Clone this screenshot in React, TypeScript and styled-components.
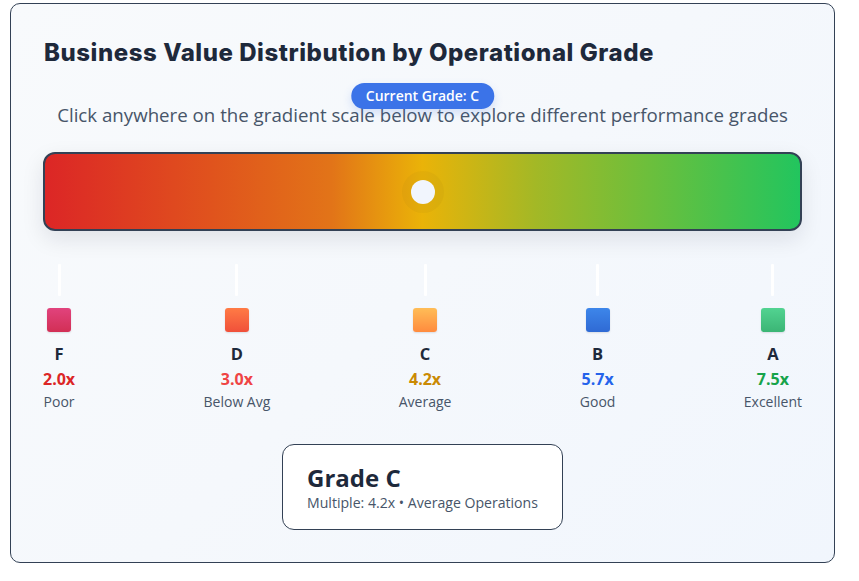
import React from "react";
import styled, { createGlobalStyle } from "styled-components";

const GlobalStyle = createGlobalStyle`
  * { box-sizing: border-box; }
  html, body { margin: 0; padding: 0; background: #ffffff; }
  body { font-family: "Open Sans", "Noto Sans", sans-serif; }
`;

const Page = styled.div`
  padding: 3px 0 0 10px;
`;

const Card = styled.section`
  width: 825px;
  height: 560px;
  border: 1px solid #334155;
  border-radius: 10px;
  background: linear-gradient(135deg, #f8fafc 0%, #f5f8fc 50%, #f1f6fd 100%);
  padding: 32px;
  display: flex;
  flex-direction: column;
`;

const Title = styled.h1`
  margin: 2px 0 0 1px;
  font-family: "Inter", "Noto Sans", sans-serif;
  font-weight: 800;
  font-size: 24px;
  line-height: 29px;
  color: #1e293b;
  letter-spacing: 0.55px;
`;

const Subtitle = styled.p`
  margin: 36px 0 0 0;
  text-align: center;
  font-size: 18.7px;
  font-weight: 500;
  line-height: 24px;
  color: #475569;
`;

const Bar = styled.div`
  position: relative;
  margin-top: 25px;
  height: 79px;
  border: 2px solid #334155;
  border-radius: 12px;
  background: linear-gradient(
    90deg,
    #dc2626 0%,
    #e0531d 22%,
    #e27418 38%,
    #eab308 50%,
    #a3b826 65%,
    #6cbf3c 80%,
    #22c55e 100%
  );
  box-shadow: 0 8px 22px rgba(15, 23, 42, 0.1);
  cursor: pointer;
`;

const Thumb = styled.div`
  position: absolute;
  top: 50%;
  width: 24px;
  height: 24px;
  border-radius: 50%;
  background: #f1f5fd;
  transform: translate(-50%, -50%);
  box-shadow: 0 0 0 9px rgba(160, 120, 20, 0.09);
`;

const Badge = styled.div`
  position: absolute;
  top: -71px;
  transform: translateX(-50%);
  height: 26px;
  padding: 0 15px;
  border-radius: 13px;
  background: #3b73e8;
  color: #ffffff;
  font-size: 14px;
  font-weight: 600;
  line-height: 26px;
  white-space: nowrap;
  box-shadow: 0 4px 10px rgba(59, 115, 232, 0.2);
`;

const Scale = styled.div`
  margin-top: 33px;
  display: flex;
  justify-content: space-between;
`;

const Stop = styled.div`
  display: flex;
  flex-direction: column;
  align-items: center;
`;

const Tick = styled.div`
  width: 3px;
  height: 32px;
  background: #ffffff;
  border-radius: 1px;
`;

const Swatch = styled.div<{ $from: string; $to: string }>`
  margin-top: 12px;
  width: 24px;
  height: 24px;
  border-radius: 3px;
  background: linear-gradient(180deg, ${(p) => p.$from}, ${(p) => p.$to});
  box-shadow: 0 1px 2px rgba(15, 23, 42, 0.12);
`;

const Letter = styled.div`
  margin-top: 11px;
  font-size: 16.5px;
  font-weight: 700;
  line-height: 22px;
  color: #1e293b;
`;

const Multiple = styled.div<{ $color: string }>`
  margin-top: 3px;
  font-size: 16px;
  font-weight: 700;
  line-height: 22px;
  color: ${(p) => p.$color};
`;

const Label = styled.div`
  margin-top: 2px;
  font-size: 14px;
  line-height: 19px;
  color: #475569;
  white-space: nowrap;
`;

const Info = styled.div`
  align-self: center;
  margin-top: 33px;
  padding: 16px 24px 17px;
  background: #ffffff;
  border: 1px solid #334155;
  border-radius: 12px;
`;

const InfoTitle = styled.div`
  font-size: 24px;
  font-weight: 700;
  line-height: 33px;
  color: #1e293b;
`;

const InfoText = styled.div`
  font-size: 14.1px;
  line-height: 18px;
  color: #475569;
`;

const grades = [
  { g: "F", m: "2.0x", l: "Poor", c: "#dc2626", from: "#e1437d", to: "#d22f55" },
  { g: "D", m: "3.0x", l: "Below Avg", c: "#ef4444", from: "#ff7b45", to: "#f0503a" },
  { g: "C", m: "4.2x", l: "Average", c: "#ca8a04", from: "#ffbd57", to: "#ff8b3e" },
  { g: "B", m: "5.7x", l: "Good", c: "#2563eb", from: "#3d86ea", to: "#2f6ad4" },
  { g: "A", m: "7.5x", l: "Excellent", c: "#16a34a", from: "#52d391", to: "#3bb575" },
];

export default function App() {
  const pos = 50;
  return (
    <Page>
      <GlobalStyle />
      <Card>
        <Title>Business Value Distribution by Operational Grade</Title>
        <Subtitle>
          Click anywhere on the gradient scale below to explore different performance grades
        </Subtitle>
        <Bar>
          <Thumb style={{ left: `${pos}%` }} />
          <Badge style={{ left: `${pos}%` }}>Current Grade: C</Badge>
        </Bar>
        <Scale>
          {grades.map((g) => (
            <Stop key={g.g}>
              <Tick />
              <Swatch $from={g.from} $to={g.to} />
              <Letter>{g.g}</Letter>
              <Multiple $color={g.c}>{g.m}</Multiple>
              <Label>{g.l}</Label>
            </Stop>
          ))}
        </Scale>
        <Info>
          <InfoTitle>Grade C</InfoTitle>
          <InfoText>Multiple: 4.2x • Average Operations</InfoText>
        </Info>
      </Card>
    </Page>
  );
}
